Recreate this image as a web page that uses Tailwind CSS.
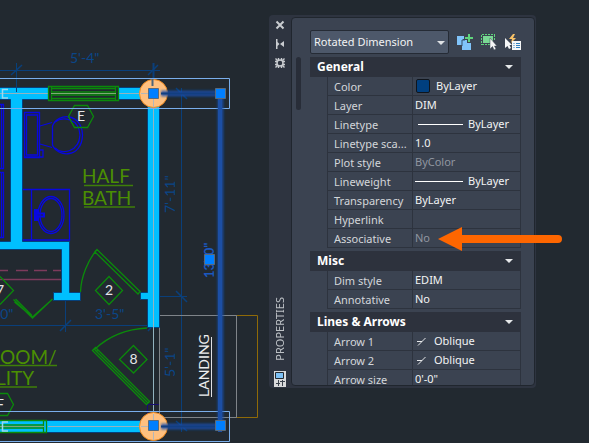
<!DOCTYPE html>
<html lang="en">
<head>
<meta charset="utf-8">
<meta name="viewport" content="width=device-width, initial-scale=1">
<title>Properties – Rotated Dimension</title>
<script src="https://cdn.jsdelivr.net/npm/@tailwindcss/browser@4"></script>
</head>
<body class="bg-[#222930]">
<main class="relative min-h-screen overflow-hidden bg-[#222930] font-['Noto_Sans','Open_Sans',sans-serif] text-[11px]">

<!-- Floor plan -->
<svg class="absolute left-0 top-0" width="260" height="443" viewBox="0 0 260 443" fill="none" role="img" aria-label="Floor plan">
  <defs>
    <filter id="glow" x="-20" y="60" width="300" height="400" filterUnits="userSpaceOnUse"><feGaussianBlur stdDeviation="1.2"/></filter>
  </defs>

  <!-- Thin dimensions -->
  <g stroke="#0a3f7a" stroke-width="1">
    <path d="M0 70.5H160M0 325.5H159M65.500 296V332M181.500 88V432M155 296.500H187" />
    <path d="M153.500 63V86" stroke-width="2"/>
    <path d="M11 75L22 65M148 75L158 65M60 331L71 320M148 331L158 320M176 88L187 99M176 291L187 302M176 421L187 431" stroke-width="1.500"/>
  </g>

  <!-- Fixtures -->
  <g stroke="#0808e0" stroke-width="1.300">
    <path d="M0 104.500H3.500V168.500H0M1.500 105V168M0 172.500H3.500V237.500H0M1.500 173V237"/>
    <path d="M24.500 112.500H39.500V157.500H24.500ZM26.500 115H37.500V155H26.500ZM40 126L52 122.500M40 144L52 147.500M40 150H43V157H24"/>
    <path d="M52.500 126C58 112 82 113 82.500 135C82 158 58 158 52.500 145Z"/>
    <path d="M55 122C62 116 79 118 80 135C79 152 62 155 55 148"/>
    <path d="M22 189.500H69.500V240H22M31.500 189V240"/>
    <ellipse cx="51" cy="215" rx="13" ry="18.500"/><ellipse cx="51" cy="215" rx="11" ry="16.500"/>
    <path d="M35 210H38V213.500H44V216.500H38V220H35ZM36.500 211V219" stroke-width="2"/>
  </g>
  <g stroke="#7d3b5c"><path d="M0 270.500H8M16 270.500H28M34 270.500H47M53 270.500H61" stroke-width="1.500"/><path d="M0 279.500H61" stroke-width="1.500"/></g>

  <!-- Landing -->
  <path d="M236 315.500H257.500V417.500H236" stroke="#8f6a08"/>
  <path d="M159.500 315.500H236.500V417.500H159.500Z" stroke="#7f8489"/>

  <!-- Walls -->
  <g fill="#00bfff" stroke="#06417c">
    <path d="M-1 87.500H141.500V99.500H22.500V241.500H69.500V292.500H80.500V300.500H53.500V292.500H61.500V249.500H-1V241.500H10.500V99.500H-1Z"/>
    <path d="M147.500 105.500H159.500V327.500H147.500V299.500H140.500V292.500H147.500Z"/>
    <path d="M-1 420.500H141V432.500H-1Z"/>
  </g>
  <path d="M0 93.500H48M119 93.500H141M48 426.500H141M153.500 106V420" stroke="#92b3bf" stroke-width="1"/>
  <path d="M16.500 63V92" stroke="#06417c"/>
  <path d="M147 404.500H159M147.500 404V414" stroke="#170c70"/>
  <g stroke="#0b8a0b" stroke-width="1.300">
    <path d="M48.500 86.500H118.500V100.500H48.500Z" fill="#222930"/><path d="M51.500 87V100M115.500 87V100M51 88.500H116M51 98.500H116M51 92H116M51 95H116"/>
    <path d="M0 420.500H46.500V432.500H0M43.500 420V432M0 425H44M0 428H44"/>
    <path d="M74.500 105.500H87.500L93.500 116.500L87.500 127.500H74.500L68.500 116.500Z"/>
    <path d="M0 393.500H7.500L13.500 404.500L7.500 415.500H0"/>
    <path d="M109 276.500L122.500 290.500L109 304.500L95.500 290.500ZM133.500 345.500L147 359.500L133.500 373L119.500 359.500ZM0 276.500L13.500 290.500L0 304.500"/>
    <path d="M80.500 292C81 277 88 260 97 249.500L140.500 292M95 252L138 294L140.500 291M97 249.500L94.500 252"/>
    <path d="M13.500 299.500L32.500 318L52.500 299M14.500 302L32.500 317L51.500 300M32 315.500L15.500 299"/>
    <path d="M95 349C108 337 126 329 147 328M92.500 350.500L95.500 347.500L149.500 401.500L146.500 404.500ZM94 349L148 403M96 352L98 350"/>
  </g>
  <path d="M51 93.500H116M0 426.500H44" stroke="#7fa978"/>

  <!-- Room labels -->
  <g fill="#4b8f02" font-family="Lato, sans-serif" font-size="19">
    <text x="82" y="183">HALF</text><text x="82" y="205">BATH</text>
    <text x="0" y="364">OOM/</text><text x="-4" y="385">LITY</text>
  </g>
  <path d="M84 185.500H133M84 207H135M0 365.500H57M0 387H37" stroke="#3f7f08" stroke-width="1.500"/>
  <g fill="#e4e6e8" font-family="Lato, sans-serif" font-size="14" text-anchor="middle">
    <text x="81" y="121">E</text><text x="109" y="295">2</text><text x="133.500" y="364">8</text><text x="0" y="295">7</text><text x="0" y="409">F</text>
  </g>
  <path d="M8 89.500H2.500V98H8M8 422H2.500V431H8" stroke="#9bd9ef" stroke-width="1.500"/>
  <g fill="#0a4688" font-family="Lato, sans-serif" font-size="14">
    <text x="70" y="63">5'-4"</text><text x="95" y="319">3'-5"</text><text x="-5" y="319">-0"</text>
    <text transform="translate(175 213) rotate(-90)">7'-11"</text>
    <text transform="translate(175 377) rotate(-90)">5'-1"</text>
  </g>
  <text transform="translate(209 397) rotate(-90)" fill="#eceeef" font-family="Lato, sans-serif" font-size="14">LANDING</text>
  <path d="M211.500 337V397" stroke="#dfe1e3"/>

  <!-- Columns -->
  <g fill="#ffc080" stroke="#f08a1e"><circle cx="153.500" cy="93.500" r="14"/><circle cx="153.500" cy="426.500" r="14"/></g>
  <path d="M141 93.500H148M153.500 99V107M153.500 414V420M141 426.500H148M153.500 432V440" stroke="#b3b7bb"/>
  <path d="M152.500 78V86" stroke="#4f6478" stroke-width="2"/>
  <path d="M0 78.500H229.500V108.500H0M0 411.500H229.500V441.500H0" stroke="#7aaeeb"/>

  <!-- Selected dimension -->
  <path d="M161 93.500H220.500V426.500H161" stroke="#1c4fae" stroke-width="6" filter="url(#glow)" opacity=".8"/>
  <path d="M161 93.500H220M220 426.500H161" stroke="#123f80" stroke-width="2"/>
  <path d="M220 88V432" stroke="#1c4fa5" stroke-width="4"/>
  <text transform="translate(214 278) rotate(-90)" fill="#174a9c" stroke="#1c4fae" stroke-width="3" font-family="Lato, sans-serif" font-weight="700" font-size="13" filter="url(#glow)" opacity=".6" aria-hidden="true">13'-0"</text>
  <text transform="translate(214 278) rotate(-90)" fill="#1b58c0" font-family="Lato, sans-serif" font-weight="700" font-size="13">13'-0"</text>
  <g fill="#007fff" stroke="#5b6a7a">
    <path d="M148.500 88.500h10v10h-10ZM215.500 88.500h10v10h-10ZM204.500 254.500h10v10h-10ZM148.500 420.500h10v10h-10ZM215.500 420.500h10v10h-10Z"/>
  </g>
</svg>

<!-- Properties palette -->
<aside class="absolute left-[269px] top-[15px] flex h-[373px] w-[267px] rounded-sm bg-[#2e3440]" aria-label="Properties">
  <div class="flex w-[22px] shrink-0 flex-col items-center gap-[7px] pt-1 pb-px">
    <button type="button" aria-label="Close" class="flex h-3 w-3 items-center justify-center"><svg width="12" height="12" viewBox="0 0 12 12" stroke="#c9ccd0" stroke-width="2"><path d="M2.500 2.500l7 7M9.500 2.500l-7 7"/></svg></button>
    <button type="button" aria-label="Auto-hide" class="flex h-3 w-3 items-center justify-center"><svg width="12" height="12" viewBox="0 0 12 12"><path d="M2 1h1.500v3l2 2-2 2v3H2ZM10 3v6L6 6Z" fill="#c9ccd0"/></svg></button>
    <button type="button" aria-label="Settings" class="flex h-3 w-3 items-center justify-center"><svg width="12" height="12" viewBox="0 0 12 12" fill="none" stroke="#c9ccd0"><circle cx="6" cy="6" r="3" stroke-width="1.500"/><path d="M4.500 1V3M7.500 1V3M4.500 9v2M7.500 9v2M1 4.500H3M1 7.500H3M9 4.500h2M9 7.500h2M1.500 1.500l2 2M10.500 1.500l-2 2M1.500 10.500l2-2M10.500 10.500l-2-2" stroke-width="1.400"/></svg></button>
    <h1 class="mt-auto rotate-180 text-[11px] leading-4 text-[#bdc1c6] [writing-mode:vertical-rl]">PROPERTIES</h1>
    <svg width="12" height="16" viewBox="0 0 12 16" class="mt-[3px] shrink-0"><path d="M0 0h12v16H0Z" fill="#d9dadb"/><path d="M1.500 1.500h8v6h-8Z" fill="#7cc0f5" stroke="#22282f"/><path d="M4.500 9v6M8.500 9v6M2 12.500h4M6 10.500h5" stroke="#3b424c"/></svg>
  </div>

  <div class="mt-[2px] mb-[2px] mr-px flex min-w-0 flex-1 overflow-hidden rounded-sm border border-[#20262e] bg-[#3b4351] pr-[13px]">
    <div class="w-[18px] shrink-0 pl-1 pt-[39px]"><div class="h-[53px] w-[5px] rounded-full bg-[#282d38]"></div></div>
    <div class="flex min-w-0 flex-1 flex-col pt-3">
      <div class="flex items-center">
        <label class="relative w-[139px] shrink-0">
          <span class="sr-only">Object type</span>
          <select class="block h-6 w-full appearance-none rounded-xs border border-[#252b35] bg-[#4d586a] pl-[3px] text-[11px] leading-4 text-[#f2f3f4]"><option>Rotated Dimension</option></select>
          <svg class="pointer-events-none absolute right-1 top-[11px]" width="8" height="4" viewBox="0 0 8 4"><path d="M0 0h8L4 4Z" fill="#dfe2e5"/></svg>
        </label>
        <div class="flex items-center gap-2 pl-2">
          <button type="button" aria-label="Toggle PICKADD"><svg class="block" width="16" height="16" viewBox="0 0 16 16"><path d="M0 2h7v3h-1v6H0Z" fill="#80c4fa"/><path d="M5 6h5v3h4v7H5Z" fill="#80c4fa"/><path d="M5 12V6H8" fill="none" stroke="#35516b"/><path d="M12 0v8M8 4h8" stroke="#5fd47c" stroke-width="2"/></svg></button>
          <button type="button" aria-label="Select objects"><svg class="block" width="16" height="16" viewBox="0 0 16 16"><path d="M1 .5h13M1 10.500h8M.5 1v10M13.500 1v6" stroke="#5fd47c" stroke-dasharray="2 1"/><path d="M2 2h10v7H2Z" fill="#7ad794"/><path d="M9 4v11l2.500-2.500L13 16l2-1-1.500-3H16Z" fill="#f5f6f7" stroke="#3b4351" stroke-width=".5"/></svg></button>
          <button type="button" aria-label="Quick select"><svg class="block" width="16" height="16" viewBox="0 0 16 16"><path d="M8 0L4 5h3L6 9l5-5H8l2-4Z" fill="#f8c267"/><path d="M0 4v10l2.500-2L4 15l2-1-1.500-3H7Z" fill="#f5f6f7"/><path d="M7 7h9v9H7Z" fill="#f5f6f7"/><path d="M8.500 9.500h1M11 9.500h4M8.500 11.500h1M11 11.500h4M8.500 13.500h1M11 13.500h4" stroke="#2f80c0"/></svg></button>
        </div>
      </div>

      <section class="mt-[3px]">
        <h2><button type="button" aria-expanded="true" class="flex h-5 w-full items-center justify-between bg-[#2d323d] pl-[7px] pr-2 text-xs font-bold leading-4 text-white">General<svg width="8" height="4" viewBox="0 0 8 4"><path d="M0 0h8L4 4Z" fill="#e6e8ea"/></svg></button></h2>
        <div class="pl-[17px]">
          <table class="w-full table-fixed border-separate border-spacing-0 text-[#f2f3f4] [&_td]:h-[19px] [&_td]:border-x [&_td]:border-b [&_td]:border-[#2d333e] [&_td]:pl-[2px] [&_td]:leading-4 [&_th]:h-[19px] [&_th]:truncate [&_th]:border-b [&_th]:border-l [&_th]:border-[#2d333e] [&_th]:pl-[6px] [&_th]:pt-px [&_th]:pr-[2px] [&_th]:text-left [&_th]:font-normal [&_th]:leading-4 [&_th]:text-[#d3d6da]">
            <colgroup><col class="w-[85px]"><col></colgroup>
            <tr><th scope="row">Color</th><td><div class="flex items-center gap-[6px] pl-px"><span class="h-[14px] w-[14px] rounded-xs border border-[#10151c] bg-[#003f7f]"></span>ByLayer</div></td></tr>
            <tr><th scope="row">Layer</th><td>DIM</td></tr>
            <tr><th scope="row">Linetype</th><td><div class="flex items-center gap-[5px] pl-[3px]"><span class="h-px w-[45px] bg-white"></span>ByLayer</div></td></tr>
            <tr><th scope="row">Linetype sca...</th><td>1.0</td></tr>
            <tr><th scope="row">Plot style</th><td class="text-[#9096a0]">ByColor</td></tr>
            <tr><th scope="row">Lineweight</th><td><div class="flex items-center gap-[5px]"><span class="h-px w-[48px] bg-white"></span>ByLayer</div></td></tr>
            <tr><th scope="row">Transparency</th><td>ByLayer</td></tr>
            <tr><th scope="row">Hyperlink</th><td></td></tr>
            <tr><th scope="row">Associative</th><td class="text-[#9096a0]">No</td></tr>
          </table>
        </div>
      </section>

      <section class="mt-[3px]">
        <h2><button type="button" aria-expanded="true" class="flex h-5 w-full items-center justify-between bg-[#2d323d] pl-[7px] pr-2 text-xs font-bold leading-4 text-white">Misc<svg width="8" height="4" viewBox="0 0 8 4"><path d="M0 0h8L4 4Z" fill="#e6e8ea"/></svg></button></h2>
        <div class="pl-[17px]">
          <table class="w-full table-fixed border-separate border-spacing-0 text-[#f2f3f4] [&_td]:h-[19px] [&_td]:border-x [&_td]:border-b [&_td]:border-[#2d333e] [&_td]:pl-[2px] [&_td]:leading-4 [&_th]:h-[19px] [&_th]:truncate [&_th]:border-b [&_th]:border-l [&_th]:border-[#2d333e] [&_th]:pl-[6px] [&_th]:pt-px [&_th]:pr-[2px] [&_th]:text-left [&_th]:font-normal [&_th]:leading-4 [&_th]:text-[#d3d6da]">
            <colgroup><col class="w-[85px]"><col></colgroup>
            <tr><th scope="row">Dim style</th><td>EDIM</td></tr>
            <tr><th scope="row">Annotative</th><td>No</td></tr>
          </table>
        </div>
      </section>

      <section class="mt-[3px]">
        <h2><button type="button" aria-expanded="true" class="flex h-5 w-full items-center justify-between bg-[#2d323d] pl-[7px] pr-2 text-xs font-bold leading-4 text-white">Lines &amp; Arrows<svg width="8" height="4" viewBox="0 0 8 4"><path d="M0 0h8L4 4Z" fill="#e6e8ea"/></svg></button></h2>
        <div class="pl-[17px]">
          <table class="w-full table-fixed border-separate border-spacing-0 text-[#f2f3f4] [&_td]:h-[19px] [&_td]:border-x [&_td]:border-b [&_td]:border-[#2d333e] [&_td]:pl-[2px] [&_td]:leading-4 [&_th]:h-[19px] [&_th]:truncate [&_th]:border-b [&_th]:border-l [&_th]:border-[#2d333e] [&_th]:pl-[6px] [&_th]:pt-px [&_th]:pr-[2px] [&_th]:text-left [&_th]:font-normal [&_th]:leading-4 [&_th]:text-[#d3d6da]">
            <colgroup><col class="w-[85px]"><col></colgroup>
            <tr><th scope="row">Arrow 1</th><td><div class="flex items-center gap-2 pl-[2px]"><svg width="9" height="9" viewBox="0 0 9 9" stroke="#e6e8ea"><path d="M1 8.500L8.500 1M0 4.500h5"/></svg>Oblique</div></td></tr>
            <tr><th scope="row">Arrow 2</th><td><div class="flex items-center gap-2 pl-[2px]"><svg width="9" height="9" viewBox="0 0 9 9" stroke="#e6e8ea"><path d="M1 8.500L8.500 1M0 4.500h5"/></svg>Oblique</div></td></tr>
            <tr><th scope="row">Arrow size</th><td>0'-0"</td></tr>
          </table>
        </div>
      </section>
    </div>
  </div>
</aside>

<!-- Callout arrow -->
<svg class="absolute left-[438px] top-[226px]" width="126" height="26" viewBox="0 0 126 26" aria-hidden="true"><path d="M0 13L24 1V9H120a4 4 0 0 1 0 8H24V25Z" fill="#fe6600"/></svg>
</main>
</body>
</html>
